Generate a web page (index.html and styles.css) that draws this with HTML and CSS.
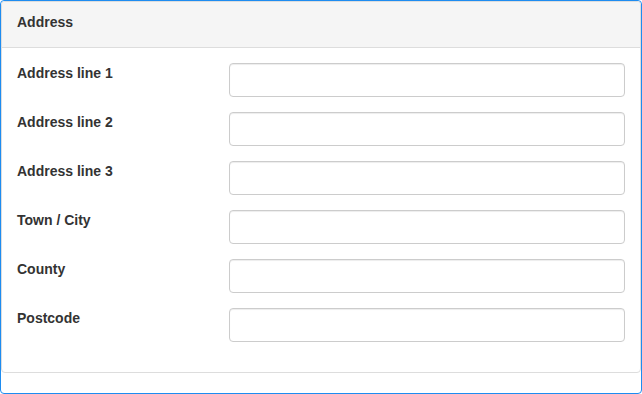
FILE: index.html
```html
<!DOCTYPE html>
<html lang="en">
<head>
    <meta charset="UTF-8">
    <meta name="viewport" content="width=device-width, initial-scale=1.0">
    <title>Address</title>
    <link rel="stylesheet" href="styles.css">
</head>
<body>
    <div class="frame">
        <div class="panel">
            <div class="panel-heading">Address</div>
            <div class="panel-body">
                <!-- Address fields -->
                <div class="form-group">
                    <label for="line1">Address line 1</label>
                    <input type="text" id="line1">
                </div>
                <div class="form-group">
                    <label for="line2">Address line 2</label>
                    <input type="text" id="line2">
                </div>
                <div class="form-group">
                    <label for="line3">Address line 3</label>
                    <input type="text" id="line3">
                </div>
                <div class="form-group">
                    <label for="town">Town / City</label>
                    <input type="text" id="town">
                </div>
                <div class="form-group">
                    <label for="county">County</label>
                    <input type="text" id="county">
                </div>
                <div class="form-group">
                    <label for="postcode">Postcode</label>
                    <input type="text" id="postcode">
                </div>
            </div>
        </div>
    </div>
</body>
</html>
```

FILE: styles.css
```css
* {
    box-sizing: border-box;
}
html, body {
    margin: 0;
    height: 100%;
}
body {
    font-family: "Liberation Sans", Arial, sans-serif;
    font-size: 14px;
    line-height: 20px;
    color: #333;
    background: #fff;
}
.frame {
    height: 394px;
    border: 1px solid #1e8cf0;
    border-radius: 4px;
}
.panel {
    border: 1px solid #ddd;
    border-radius: 4px;
    margin-bottom: 20px;
}
.panel-heading {
    padding: 10px 15px 15px;
    background-color: #f5f5f5;
    border-bottom: 1px solid #ddd;
    border-radius: 3px 3px 0 0;
    font-weight: bold;
}
.panel-body {
    padding: 15px;
}
.form-group {
    display: grid;
    grid-template-columns: 182px minmax(0, 1fr);
    column-gap: 30px;
    margin-bottom: 15px;
}
label {
    font-weight: bold;
}
input {
    height: 34px;
    width: 100%;
    padding: 6px 12px;
    font-size: 14px;
    border: 1px solid #ccc;
    border-radius: 4px;
    box-shadow: inset 0 1px 1px rgba(0, 0, 0, .075);
}
```
